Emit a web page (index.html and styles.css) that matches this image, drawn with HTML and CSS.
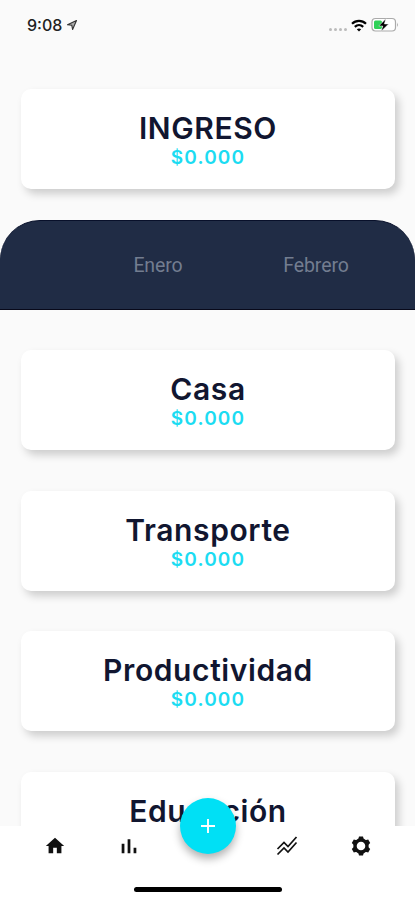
FILE: index.html
```html
<!DOCTYPE html>
<html lang="es">
<head>
    <meta charset="UTF-8">
    <meta name="viewport" content="width=device-width, initial-scale=1.0">
    <title>Ingresos</title>
    <link rel="stylesheet" href="styles.css">
</head>
<body>
    <header class="status-bar">
        <span class="time">9:08</span>
        <svg class="location" width="12" height="12" viewBox="0 0 12 12"><path d="M1.5 5.8 10.5 1.5 6.6 10.5 5.8 6.3Z" fill="#aaa" stroke="#333" stroke-width="1.1" stroke-linejoin="round"/></svg>
        <div class="status-icons">
            <div class="signal"><i></i><i></i><i></i><i></i></div>
            <svg class="wifi" width="16" height="13" viewBox="0 0 16 13" fill="none" stroke="#000" stroke-width="2.2">
                <path d="M1 4.7C5 .8 11 .8 15 4.7"/>
                <path d="M3.8 7.9c2.5-2.3 5.9-2.3 8.4 0"/>
                <path d="M8 12.4 5.8 10.2c1.2-1.1 3.2-1.1 4.4 0Z" fill="#000" stroke="none"/>
            </svg>
            <svg class="battery" width="28" height="16" viewBox="0 0 28 16">
                <rect x="1" y="1.5" width="23.5" height="12.5" rx="3.5" fill="#fff" stroke="#aaa" stroke-width="1.2"/>
                <path d="M26 5.5q1.8 2.2 0 4.5Z" fill="#aaa"/>
                <rect x="3" y="3.5" width="8" height="8.5" rx="1.5" fill="#2fd158"/>
                <path d="M14.8 1.8 7.8 9h4l-1.6 5.2L17.6 7h-4.2Z" fill="#000" stroke="#fff" stroke-width=".5"/>
            </svg>
        </div>
    </header>

    <main>
        <section class="card income">
            <h2>INGRESO</h2>
            <p>$0.000</p>
        </section>

        <nav class="months">
            <span></span>
            <span>Enero</span>
            <span>Febrero</span>
        </nav>

        <div class="categories">
            <section class="card">
                <h2>Casa</h2>
                <p>$0.000</p>
            </section>
            <section class="card">
                <h2>Transporte</h2>
                <p>$0.000</p>
            </section>
            <section class="card">
                <h2>Productividad</h2>
                <p>$0.000</p>
            </section>
            <section class="card">
                <h2>Educación</h2>
            </section>
        </div>
    </main>

    <footer class="tab-bar">
        <div class="tabs">
            <a class="tab"><svg width="22" height="22" viewBox="0 0 24 24"><path d="M10 20v-6h4v6h5v-8h3L12 3 2 12h3v8Z"/></svg></a>
            <a class="tab"><svg width="22" height="22" viewBox="0 0 24 24"><path d="M4 9.5h3V20H4zM10.5 4.5h3V20h-3zM17 14h3v6h-3z"/></svg></a>
            <button class="add"><svg width="16" height="16" viewBox="0 0 16 16"><path d="M8 1v14M1 8h14" stroke="#fff" stroke-width="1.9"/></svg></button>
            <a class="tab"><svg width="22" height="22" viewBox="0 0 22 22"><path d="M1.5 14 8 7.5l4 4L20.5 2M1.5 19.5 8 13l4 4 8.500-9.500" fill="none" stroke="#111" stroke-width="1.7"/></svg></a>
            <a class="tab"><svg width="22" height="22" viewBox="0 0 22 22"><circle cx="11" cy="11" r="6" fill="none" stroke="#111" stroke-width="3.4"/><path d="M9 1.5h4l.8 3H8.2ZM9 20.5h4l.8-3H8.2ZM1.8 8l2-3.5 3 .8L4 10.2ZM20.2 8l-2-3.5-3 .8 2.800 4.900ZM1.8 14l2 3.5 3-.8L4 11.800ZM20.2 14l-2 3.5-3-.8 2.800-4.900Z"/></svg></a>
        </div>
        <div class="home-indicator"></div>
    </footer>
</body>
</html>
```

FILE: styles.css
```css
* {
    box-sizing: border-box;
}
body {
    margin: 0;
    height: 900px;
    overflow: hidden;
    background-color: #fafafa;
    font-family: Inter, sans-serif;
    color: #111630;
}
.status-bar {
    display: flex;
    align-items: center;
    height: 50px;
    padding: 0 16px 0 27px;
}
.time {
    font-size: 16px;
    font-weight: 500;
    color: #222;
}
.location {
    margin-left: 4px;
}
.status-icons {
    display: flex;
    align-items: center;
    gap: 4px;
    margin-left: auto;
}
.signal {
    display: flex;
    gap: 2px;
    margin-top: 8px;
}
.signal i {
    width: 3px;
    height: 3px;
    border-radius: 50%;
    background-color: #bbb;
}
.card {
    height: 100px;
    padding-top: 22px;
    border-radius: 10px;
    background-color: #fff;
    box-shadow: 4px 5px 8px rgba(0, 0, 0, 0.18);
    text-align: center;
}
.income {
    margin: 39px 20px 31px 21px;
}
.card h2 {
    margin: 0;
    font-size: 30px;
    font-weight: 600;
    line-height: 34px;
    letter-spacing: 0.6px;
}
.card p {
    margin: 1px 0 0;
    font-size: 19px;
    font-weight: 600;
    line-height: 24px;
    letter-spacing: 1.2px;
    color: #1cdcf2;
}
.months {
    display: grid;
    grid-template-columns: 79px 158px 158px;
    height: 90px;
    align-items: center;
    border-radius: 40px 40px 0 0;
    border-top: 1px solid #08102a;
    border-bottom: 1px solid #08091a;
    background-color: #202c45;
    font-family: Roboto, sans-serif;
    font-size: 19.5px;
    letter-spacing: -0.1px;
    color: #737d90;
    text-align: center;
}
.categories {
    display: grid;
    gap: 40.7px;
    padding: 40px 20px 0 21px;
}
.tab-bar {
    position: fixed;
    left: 0;
    bottom: 0;
    width: 415px;
    height: 74px;
    background-color: #fff;
}
.tabs {
    display: grid;
    grid-template-columns: 74px 74px 84px 74px 74px;
    justify-content: center;
    justify-items: center;
    height: 40px;
    align-items: center;
}
.tab svg {
    display: block;
    fill: #111;
}
.add {
    display: flex;
    align-items: center;
    justify-content: center;
    width: 56px;
    height: 56px;
    padding: 0;
    margin-top: -40px;
    border: none;
    border-radius: 50%;
    background-color: #00e0f5;
    box-shadow: 0 5px 9px rgba(0, 0, 0, 0.3);
}
.home-indicator {
    width: 148px;
    height: 5px;
    margin: 21px auto 0;
    border-radius: 3px;
    background-color: #000;
}
```
